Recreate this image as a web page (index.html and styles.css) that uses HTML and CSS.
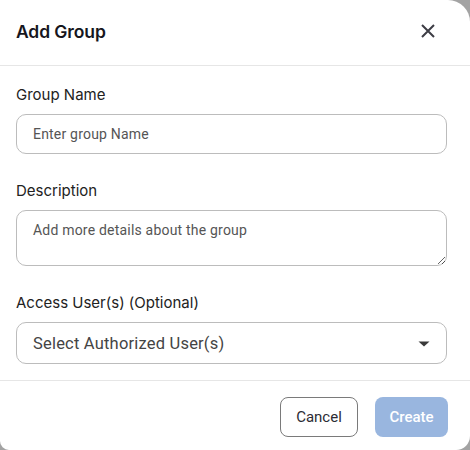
FILE: index.html
```html
<!DOCTYPE html>
<html>
<head>
<meta charset="utf-8">
<link rel="stylesheet" href="styles.css">
</head>
<body>
<div class="dialog">
  <div class="header">
    <h2 class="title">Add Group</h2>
    <button class="close" aria-label="Close">
      <svg width="16" height="16" viewBox="0 0 16 16"><path d="M2 2L14 14M14 2L2 14" stroke="#3d3d45" stroke-width="2" fill="none"/></svg>
    </button>
  </div>
  <div class="body">
    <div class="field">
      <label class="label">Group Name</label>
      <input class="input" type="text" placeholder="Enter group Name">
    </div>
    <div class="field">
      <label class="label">Description</label>
      <textarea class="textarea" placeholder="Add more details about the group"></textarea>
    </div>
    <div class="field">
      <label class="label">Access User(s) (Optional)</label>
      <div class="select">
        <span class="select-text">Select Authorized User(s)</span>
        <svg width="12" height="6" viewBox="0 0 12 6"><path d="M0.5 0.5H11.5L6 5.5Z" fill="#3a3a3a"/></svg>
      </div>
    </div>
  </div>
  <div class="footer">
    <button class="btn btn-cancel">Cancel</button>
    <button class="btn btn-create">Create</button>
  </div>
</div>
</body>
</html>
```

FILE: styles.css
```css
html, body {
  margin: 0;
  padding: 0;
  background: #a3a3a3;
  width: 470px;
  height: 450px;
  overflow: hidden;
}
.dialog {
  width: 470px;
  height: 450px;
  background: #fff;
  border-radius: 0 22px 14px 9px;
  box-sizing: border-box;
  display: flex;
  flex-direction: column;
  font-family: Inter, "Noto Sans", sans-serif;
}
.header {
  height: 66px;
  box-sizing: border-box;
  border-bottom: 1px solid #e6e6e6;
  display: flex;
  align-items: center;
  justify-content: space-between;
  padding: 0 34px 0 16px;
}
.title {
  margin: 0;
  font-size: 17.5px;
  font-weight: 600;
  color: #16161d;
  letter-spacing: -0.1px;
  padding-bottom: 2px;
}
.close {
  border: none;
  background: none;
  padding: 0;
  width: 16px;
  height: 16px;
  display: flex;
  margin-bottom: 4px;
}
.body {
  padding: 19px 23px 0 16px;
  display: flex;
  flex-direction: column;
  gap: 27px;
  height: 315px;
  box-sizing: border-box;
  border-bottom: 1px solid #e6e6e6;
}
.field {
  display: flex;
  flex-direction: column;
  gap: 10px;
}
.label {
  font-size: 15px;
  color: #222;
  line-height: 19px;
}
.input, .textarea, .select {
  box-sizing: border-box;
  width: 431px;
  border: 1px solid #bcbcbc;
  border-radius: 10px;
  font-family: Roboto, sans-serif;
  color: #333;
  background: #fff;
  outline: none;
}
.input {
  height: 40px;
  padding: 0 16px;
  font-size: 14px;
}
.textarea {
  height: 56px;
  padding: 11px 16px 9px;
  font-size: 14px;
  resize: vertical;
  display: block;
}
.input::placeholder, .textarea::placeholder {
  color: #555;
  letter-spacing: 0.2px;
}
.select {
  height: 42px;
  padding: 0 16px 0 16px;
  display: flex;
  align-items: center;
  justify-content: space-between;
}
.select-text {
  font-size: 16.5px;
  color: #444;
  letter-spacing: 0.2px;
}
.select svg {
  margin-top: 2px;
}
.footer {
  flex: 1;
  display: flex;
  justify-content: flex-end;
  align-items: flex-start;
  padding: 16px 22px 0 0;
  gap: 17px;
}
.btn {
  height: 40px;
  border-radius: 8px;
  font-family: Roboto, sans-serif;
  font-size: 15px;
  box-sizing: border-box;
}
.btn-cancel {
  width: 78px;
  border: 1px solid #7a7a7a;
  background: #fff;
  color: #2c2c35;
}
.btn-create {
  width: 73px;
  border: none;
  background: #99b6df;
  color: #fff;
  font-weight: 500;
}
```
